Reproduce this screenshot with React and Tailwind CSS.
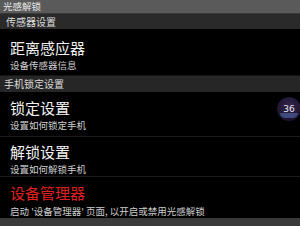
export default function App() {
  const font = { fontFamily: '"Noto Sans CJK SC", "Noto Sans", sans-serif' };
  return (
    <div className="relative w-[300px] h-[226px] bg-black overflow-hidden flex flex-col" style={font}>
      <div className="h-[14px] bg-[#5a5a5a] border-b border-[#3a3a3a] flex items-center px-[3px] text-[9.5px] leading-none text-[#ececec] shrink-0">
        光感解锁
      </div>
      <div className="h-[15px] bg-[#2a2a2a] flex items-center px-[6px] text-[10px] leading-none text-[#dcdcdc] shrink-0">
        传感器设置
      </div>
      <div className="h-[47px] flex flex-col pl-[10px] pt-[11px] shrink-0 border-b border-[#151515]">
        <div className="text-[15px] leading-[16px] text-[#f2f2f2]">距离感应器</div>
        <div className="text-[9.5px] leading-[10px] mt-[4px] text-[#cfcfcf]">设备传感器信息</div>
      </div>
      <div className="h-[16px] bg-[#262626] flex items-center px-[4px] text-[10px] leading-none text-[#dcdcdc] shrink-0">
        手机锁定设置
      </div>
      <div className="h-[45px] flex flex-col pl-[10px] pt-[8px] shrink-0 border-b border-[#1c1c1c]">
        <div className="text-[15px] leading-[16px] text-[#f2f2f2]">锁定设置</div>
        <div className="text-[9.5px] leading-[10px] mt-[4px] text-[#cfcfcf]">设置如何锁定手机</div>
      </div>
      <div className="h-[40px] flex flex-col pl-[10px] pt-[7px] shrink-0 border-b border-[#1c1c1c]">
        <div className="text-[15px] leading-[16px] text-[#f2f2f2]">解锁设置</div>
        <div className="text-[9.5px] leading-[10px] mt-[4px] text-[#cfcfcf]">设置如何解锁手机</div>
      </div>
      <div className="h-[41px] flex flex-col pl-[10px] pt-[8px] shrink-0">
        <div className="text-[15px] leading-[16px] text-[#e0201e]">设备管理器</div>
        <div className="text-[9.5px] leading-[10px] mt-[5px] text-[#cfcfcf]">启动 '设备管理器' 页面, 以开启或禁用光感解锁</div>
      </div>
      <div className="flex-1 bg-[#3a3a3a]" />
      <div className="absolute left-[277px] top-[97px] w-[24px] h-[24px] rounded-full bg-[radial-gradient(circle_at_50%_40%,#34264d_0%,#201733_60%,#0f0a1a_100%)] overflow-hidden flex items-center justify-center">
        <div className="absolute left-[3px] right-[3px] bottom-[3px] h-[5px] rounded-b-full bg-[#4f6aa8] opacity-60" />
        <span className="relative text-[9px] leading-none text-[#e8e4f0]" style={{ fontFamily: '"DejaVu Sans", sans-serif' }}>36</span>
      </div>
    </div>
  );
}
